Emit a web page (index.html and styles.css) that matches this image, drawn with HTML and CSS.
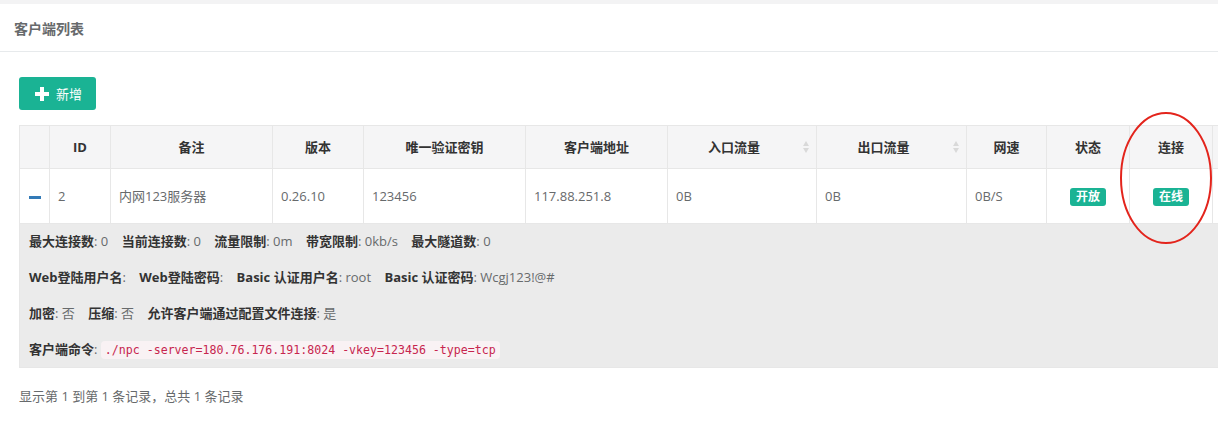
FILE: index.html
```html
<!DOCTYPE html>
<html lang="zh-CN">
<head>
  <meta charset="UTF-8">
  <title>客户端列表</title>
  <link rel="stylesheet" href="styles.css">
</head>
<body>
  <div class="ibox">
    <div class="ibox-title">
      <h5>客户端列表</h5>
    </div>
    <div class="ibox-content">
      <button class="btn-add">
        <svg class="icon-plus" width="14" height="14" viewBox="0 0 14 14"><rect x="5" y="0" width="4" height="14" fill="#fff"/><rect x="0" y="5" width="14" height="4" fill="#fff"/></svg>
        <span>新增</span>
      </button>

      <div class="table-wrap">
        <table class="client-table">
          <colgroup>
            <col style="width:30px">
            <col style="width:61px">
            <col style="width:162px">
            <col style="width:91px">
            <col style="width:162px">
            <col style="width:142px">
            <col style="width:149px">
            <col style="width:150px">
            <col style="width:80px">
            <col style="width:83px">
            <col style="width:83px">
            <col style="width:80px">
          </colgroup>
          <thead>
            <tr>
              <th></th>
              <th>ID</th>
              <th>备注</th>
              <th>版本</th>
              <th>唯一验证密钥</th>
              <th>客户端地址</th>
              <th class="sortable">入口流量<span class="sort-icon"></span></th>
              <th class="sortable">出口流量<span class="sort-icon"></span></th>
              <th>网速</th>
              <th>状态</th>
              <th>连接</th>
              <th></th>
            </tr>
          </thead>
          <tbody>
            <tr class="data-row">
              <td class="toggle"><span class="minus"></span></td>
              <td>2</td>
              <td>内网123服务器</td>
              <td>0.26.10</td>
              <td>123456</td>
              <td>117.88.251.8</td>
              <td>0B</td>
              <td>0B</td>
              <td>0B/S</td>
              <td class="center"><span class="badge">开放</span></td>
              <td class="center"><span class="badge">在线</span></td>
              <td></td>
            </tr>
            <tr class="detail-row">
              <td colspan="12">
                <div class="detail-line">
                  <span class="item"><b>最大连接数</b>: 0</span>
                  <span class="item"><b>当前连接数</b>: 0</span>
                  <span class="item"><b>流量限制</b>: 0m</span>
                  <span class="item"><b>带宽限制</b>: 0kb/s</span>
                  <span class="item"><b>最大隧道数</b>: 0</span>
                </div>
                <div class="detail-line">
                  <span class="item"><b>Web登陆用户名</b>: </span>
                  <span class="item"><b>Web登陆密码</b>: </span>
                  <span class="item"><b>Basic 认证用户名</b>: root</span>
                  <span class="item"><b>Basic 认证密码</b>: Wcgj123!@#</span>
                </div>
                <div class="detail-line">
                  <span class="item"><b>加密</b>: 否</span>
                  <span class="item"><b>压缩</b>: 否</span>
                  <span class="item"><b>允许客户端通过配置文件连接</b>: 是</span>
                </div>
                <div class="detail-line">
                  <b>客户端命令</b>: <code>./npc -server=180.76.176.191:8024 -vkey=123456 -type=tcp</code>
                </div>
              </td>
            </tr>
          </tbody>
        </table>
        <svg class="mark" width="100" height="140" viewBox="0 0 100 140"><ellipse cx="50" cy="70" rx="45" ry="65" fill="none" stroke="#e3241c" stroke-width="2"/></svg>
      </div>

      <div class="pagination-info">显示第 1 到第 1 条记录，总共 1 条记录</div>
    </div>
  </div>
</body>
</html>
```

FILE: styles.css
```css
body {
  margin: 0;
  background-color: #f3f3f4;
  font-family: "Open Sans", "Noto Sans CJK SC", sans-serif;
  font-size: 13px;
  color: #676a6c;
  overflow: hidden;
}
.ibox {
  margin-top: 4px;
  background-color: #fff;
  min-height: 433px;
}
.ibox-title {
  height: 47px;
  padding: 0 14px;
  border-bottom: 1px solid #e7eaec;
  display: flex;
  align-items: center;
}
.ibox-title h5 {
  margin: 0;
  font-size: 14px;
  font-weight: 600;
  color: #676a6c;
}
.ibox-content {
  padding: 25px 0 20px 19px;
}
.btn-add {
  display: flex;
  align-items: center;
  gap: 7px;
  height: 33px;
  padding: 0 14px 0 16px;
  border: none;
  border-radius: 3px;
  background-color: #1ab394;
  color: #fff;
  font-family: inherit;
  font-size: 13px;
  cursor: pointer;
}
.table-wrap {
  position: relative;
  margin-top: 15px;
  width: 1273px;
}
.client-table {
  width: 1273px;
  table-layout: fixed;
  border-collapse: collapse;
}
.client-table th,
.client-table td {
  border: 1px solid #e7e7e7;
  line-height: 18px;
}
.client-table th {
  background-color: #f5f5f6;
  color: #333;
  font-weight: 700;
  text-align: center;
  height: 42px;
  padding: 0 8px;
  position: relative;
}
.client-table th.sortable {
  padding-right: 24px;
}
.sort-icon {
  position: absolute;
  right: 6px;
  top: 15px;
  width: 7px;
  height: 12px;
}
.sort-icon::before,
.sort-icon::after {
  content: "";
  position: absolute;
  left: 0;
  border-left: 3.5px solid transparent;
  border-right: 3.5px solid transparent;
}
.sort-icon::before {
  top: 0;
  border-bottom: 5px solid #d9d9d9;
}
.sort-icon::after {
  bottom: 0;
  border-top: 5px solid #d9d9d9;
}
.data-row td {
  height: 54px;
  padding: 0 8px;
  color: #676a6c;
}
.client-table td.center {
  text-align: center;
}
.toggle {
  text-align: center;
}
.minus {
  display: inline-block;
  width: 12px;
  height: 3px;
  background-color: #337ab7;
  vertical-align: middle;
}
.badge {
  display: inline-block;
  padding: 0 6px;
  line-height: 18px;
  border-radius: 3px;
  background-color: #1ab394;
  color: #fff;
  font-size: 12px;
  font-weight: 700;
}
.detail-row td {
  background-color: #ebebeb;
  padding: 8px 9px;
  color: #676a6c;
}
.detail-line {
  line-height: 18px;
  margin-bottom: 18px;
  white-space: nowrap;
}
.detail-line:last-child {
  margin-bottom: 0;
}
.detail-line b {
  color: #333;
  font-weight: 700;
}
.item {
  margin-right: 10px;
}
code {
  font-family: "DejaVu Sans Mono", monospace;
  font-size: 11.6px;
  color: #c7254e;
  background-color: #f9f2f4;
  padding: 2px 4px;
  border-radius: 4px;
}
.mark {
  position: absolute;
  left: 1097px;
  top: -17px;
}
.pagination-info {
  margin-top: 19px;
  line-height: 18px;
  color: #676a6c;
}
```
